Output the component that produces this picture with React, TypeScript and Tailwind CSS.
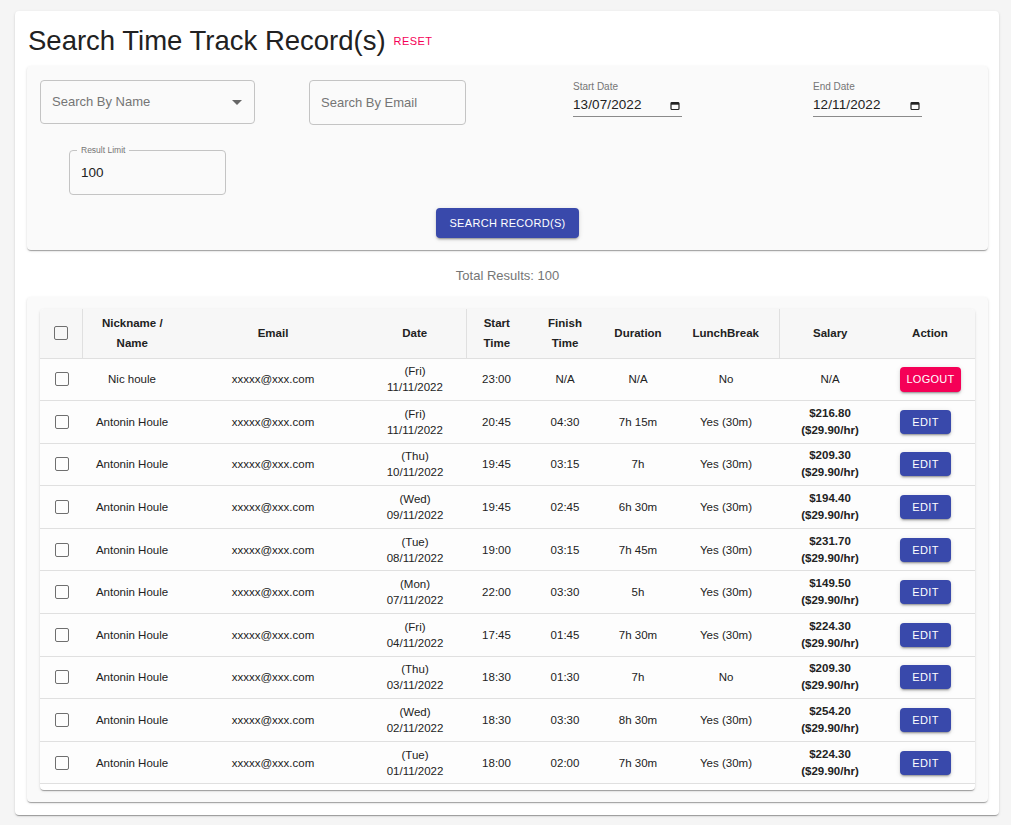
import React from "react";

const rows = [
  { name: "Nic houle", day: "(Fri)", date: "11/11/2022", start: "23:00", finish: "N/A", dur: "N/A", lunch: "No", salary: null, action: "LOGOUT" },
  { name: "Antonin Houle", day: "(Fri)", date: "11/11/2022", start: "20:45", finish: "04:30", dur: "7h 15m", lunch: "Yes (30m)", salary: "$216.80", action: "EDIT" },
  { name: "Antonin Houle", day: "(Thu)", date: "10/11/2022", start: "19:45", finish: "03:15", dur: "7h", lunch: "Yes (30m)", salary: "$209.30", action: "EDIT" },
  { name: "Antonin Houle", day: "(Wed)", date: "09/11/2022", start: "19:45", finish: "02:45", dur: "6h 30m", lunch: "Yes (30m)", salary: "$194.40", action: "EDIT" },
  { name: "Antonin Houle", day: "(Tue)", date: "08/11/2022", start: "19:00", finish: "03:15", dur: "7h 45m", lunch: "Yes (30m)", salary: "$231.70", action: "EDIT" },
  { name: "Antonin Houle", day: "(Mon)", date: "07/11/2022", start: "22:00", finish: "03:30", dur: "5h", lunch: "Yes (30m)", salary: "$149.50", action: "EDIT" },
  { name: "Antonin Houle", day: "(Fri)", date: "04/11/2022", start: "17:45", finish: "01:45", dur: "7h 30m", lunch: "Yes (30m)", salary: "$224.30", action: "EDIT" },
  { name: "Antonin Houle", day: "(Thu)", date: "03/11/2022", start: "18:30", finish: "01:30", dur: "7h", lunch: "No", salary: "$209.30", action: "EDIT" },
  { name: "Antonin Houle", day: "(Wed)", date: "02/11/2022", start: "18:30", finish: "03:30", dur: "8h 30m", lunch: "Yes (30m)", salary: "$254.20", action: "EDIT" },
  { name: "Antonin Houle", day: "(Tue)", date: "01/11/2022", start: "18:00", finish: "02:00", dur: "7h 30m", lunch: "Yes (30m)", salary: "$224.30", action: "EDIT" },
];

function Checkbox() {
  return <div className="mx-auto w-[14px] h-[14px] rounded-[2px] border-[1.6px] border-[#6f6f6f]" />;
}

function CalendarIcon() {
  return (
    <svg width="10" height="10" viewBox="0 0 10 10" className="shrink-0">
      <rect x="1" y="1.5" width="8" height="7" rx="1" fill="none" stroke="#222" strokeWidth="1.2" />
      <rect x="1" y="1.5" width="8" height="2.2" fill="#222" />
    </svg>
  );
}

function DateField({ label, value }: { label: string; value: string }) {
  return (
    <div className="w-[109px] flex flex-col">
      <div className="text-[10px] leading-[12px] text-[#757575] mt-[1px]">{label}</div>
      <div className="flex items-center justify-between h-[24px] border-b border-[#8a8a8a] pt-[2px]">
        <span className="text-[13.5px] text-[#222] tracking-[0.1px]">{value}</span>
        <span className="mr-[2px]"><CalendarIcon /></span>
      </div>
    </div>
  );
}

const paperShadow = "shadow-[0px_2px_1px_-1px_rgba(0,0,0,0.2),0px_1px_1px_0px_rgba(0,0,0,0.14),0px_1px_3px_0px_rgba(0,0,0,0.12)]";

export default function App() {
  return (
    <div className="min-h-screen bg-[#f5f5f5] font-['Liberation_Sans',Arial,sans-serif] pt-[11px] pb-[10px]">
      <div className={`ml-[15px] w-[984px] bg-white rounded-[4px] ${paperShadow} px-[12px] pt-[14px] pb-[13px]`}>
        {/* Title */}
        <div className="flex items-center h-[32px] pl-[1px]">
          <h1 className="text-[27.5px] leading-[32px] text-[#212121] font-normal">Search Time Track Record(s)</h1>
          <button className="ml-[8px] mt-[1px] text-[11px] tracking-[0.4px] text-[#f50057] uppercase">Reset</button>
        </div>

        {/* Filter card */}
        <div className={`mt-[9px] w-[961px] bg-[#fafafa] rounded-[4px] ${paperShadow} pl-[13px] pt-[14px] pb-[12px]`}>
          <div className="flex items-start h-[45px]">
            <div className="w-[215px] h-[44px] border border-[#c4c4c4] rounded-[4px] flex items-center justify-between pl-[11px] pr-[12px]">
              <span className="text-[13px] text-[#757575]">Search By Name</span>
              <svg width="10" height="5" viewBox="0 0 10 5"><path d="M0 0 L10 0 L5 5 Z" fill="#666" /></svg>
            </div>
            <div className="ml-[54px] w-[157px] h-[45px] border border-[#c4c4c4] rounded-[4px] flex items-center pl-[11px]">
              <span className="text-[13px] text-[#757575]">Search By Email</span>
            </div>
            <div className="ml-[107px]">
              <DateField label="Start Date" value="13/07/2022" />
            </div>
            <div className="ml-[131px]">
              <DateField label="End Date" value="12/11/2022" />
            </div>
          </div>

          <div className="mt-[25px] ml-[29px] relative w-[157px] h-[45px] border border-[#c4c4c4] rounded-[4px] flex items-center pl-[11px] pt-[2px]">
            <span className="absolute left-[7px] top-[-7px] px-[4px] bg-[#fafafa] text-[8.5px] leading-[12px] text-[#757575]">Result Limit</span>
            <span className="text-[13.5px] text-[#222]">100</span>
          </div>

          <div className="flex justify-center mt-[13px] pr-[13px]">
            <button className={`w-[143px] h-[30px] bg-[#3949ab] rounded-[4px] text-white text-[11px] tracking-[0.3px] uppercase shadow-[0px_3px_1px_-2px_rgba(0,0,0,0.2),0px_2px_2px_0px_rgba(0,0,0,0.14),0px_1px_5px_0px_rgba(0,0,0,0.12)]`}>
              Search Record(s)
            </button>
          </div>
        </div>

        {/* Total results */}
        <div className="mt-[18px] h-[16px] text-center text-[13px] leading-[16px] text-[#757575] w-[961px]">Total Results: 100</div>

        {/* Table card */}
        <div className={`mt-[13px] w-[961px] bg-[#fafafa] rounded-[4px] ${paperShadow} px-[13px] pt-[12px] pb-[12px]`}>
          <div className={`w-[935px] bg-white rounded-[4px] ${paperShadow} pb-[6px] overflow-hidden`}>
            <table className="w-[935px] table-fixed border-collapse text-[#222]">
              <colgroup>
                <col className="w-[42px]" />
                <col className="w-[100px]" />
                <col className="w-[182px]" />
                <col className="w-[102px]" />
                <col className="w-[61px]" />
                <col className="w-[76px]" />
                <col className="w-[70px]" />
                <col className="w-[106px]" />
                <col className="w-[102px]" />
                <col className="w-[94px]" />
              </colgroup>
              <thead>
                <tr className="h-[49px] bg-[#f7f7f7] border-b border-[#e0e0e0] text-[11.5px] leading-[20px] font-bold">
                  <th className="border-r border-[#e0e0e0] pl-[1px]"><Checkbox /></th>
                  <th className="font-bold">Nickname /<br />Name</th>
                  <th className="font-bold">Email</th>
                  <th className="font-bold border-r border-[#e0e0e0]">Date</th>
                  <th className="font-bold">Start<br />Time</th>
                  <th className="font-bold">Finish<br />Time</th>
                  <th className="font-bold">Duration</th>
                  <th className="font-bold border-r border-[#e0e0e0]">LunchBreak</th>
                  <th className="font-bold">Salary</th>
                  <th className="font-bold pl-[4px]">Action</th>
                </tr>
              </thead>
              <tbody>
                {rows.map((r, i) => (
                  <tr key={i} className="h-[42.6px] border-b border-[#e0e0e0] text-[11.5px] leading-[16px] text-center bg-[#fdfdfd]">
                    <td className="pl-[1px]"><Checkbox /></td>
                    <td>{r.name}</td>
                    <td>xxxxx@xxx.com</td>
                    <td>{r.day}<br />{r.date}</td>
                    <td>{r.start}</td>
                    <td>{r.finish}</td>
                    <td>{r.dur}</td>
                    <td>{r.lunch}</td>
                    <td className={r.salary ? "font-bold leading-[17px]" : ""}>
                      {r.salary ? (<>{r.salary}<br />($29.90/hr)</>) : "N/A"}
                    </td>
                    <td className="text-left pl-[19px]">
                      {r.action === "LOGOUT" ? (
                        <button className="w-[61px] h-[25px] bg-[#f50057] rounded-[4px] text-white text-[11px] tracking-[0.3px] shadow-[0px_3px_1px_-2px_rgba(0,0,0,0.2),0px_2px_2px_0px_rgba(0,0,0,0.14),0px_1px_5px_0px_rgba(0,0,0,0.12)]">LOGOUT</button>
                      ) : (
                        <button className="w-[51px] h-[24px] bg-[#3949ab] rounded-[4px] text-white text-[11px] tracking-[0.4px] shadow-[0px_3px_1px_-2px_rgba(0,0,0,0.2),0px_2px_2px_0px_rgba(0,0,0,0.14),0px_1px_5px_0px_rgba(0,0,0,0.12)]">EDIT</button>
                      )}
                    </td>
                  </tr>
                ))}
              </tbody>
            </table>
          </div>
        </div>
      </div>
    </div>
  );
}
